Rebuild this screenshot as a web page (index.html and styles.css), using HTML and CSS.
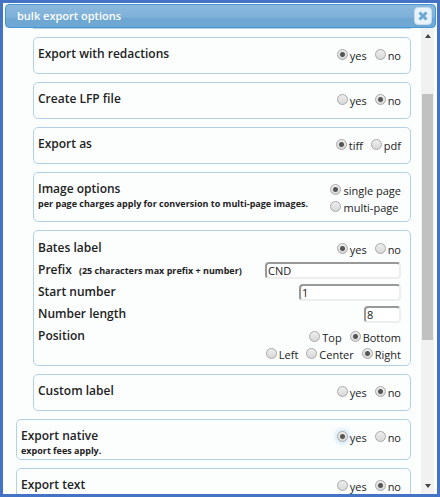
FILE: index.html
```html
<!DOCTYPE html>
<html lang="en">

<head>
    <meta charset="UTF-8">
    <meta name="viewport" content="width=device-width, initial-scale=1.0">
    <title>bulk export options</title>
    <link rel="stylesheet" href="styles.css">
</head>

<body>
    <div class="dialog">
        <div class="titlebar">
            <h1>bulk export options</h1>
            <button type="button" class="close-btn" aria-label="close">
                <svg width="10" height="10" viewBox="0 0 10 10">
                    <path d="M1.5 1.5L8.5 8.5M8.5 1.5L1.5 8.5" stroke="#6da8d5" stroke-width="3" fill="none" />
                </svg>
            </button>
        </div>
        <div class="content">
            <form class="options">
                <div class="panel-end sub"></div>
                <div class="panel sub">
                    <h2>Export with redactions</h2>
                    <div class="choices">
                        <label><input type="radio" name="redactions" checked>yes</label>
                        <label><input type="radio" name="redactions">no</label>
                    </div>
                </div>
                <div class="panel sub">
                    <h2>Create LFP file</h2>
                    <div class="choices">
                        <label><input type="radio" name="lfp">yes</label>
                        <label><input type="radio" name="lfp" checked>no</label>
                    </div>
                </div>
                <div class="panel sub">
                    <h2>Export as</h2>
                    <div class="choices">
                        <label><input type="radio" name="format" checked>tiff</label>
                        <label><input type="radio" name="format">pdf</label>
                    </div>
                </div>
                <div class="panel sub">
                    <div>
                        <h2>Image options</h2>
                        <p class="note">per page charges apply for conversion to multi-page images.</p>
                    </div>
                    <div class="choices stacked">
                        <label><input type="radio" name="pages" checked>single page</label>
                        <label><input type="radio" name="pages">multi-page</label>
                    </div>
                </div>
                <div class="panel sub bates">
                    <div class="row">
                        <h2>Bates label</h2>
                        <div class="choices">
                            <label><input type="radio" name="bates" checked>yes</label>
                            <label><input type="radio" name="bates">no</label>
                        </div>
                    </div>
                    <div class="row">
                        <label class="name" for="prefix">Prefix <span class="note">(25 characters max prefix + number)</span></label>
                        <input type="text" id="prefix" class="field long" maxlength="25" value="CND">
                    </div>
                    <div class="row">
                        <label class="name" for="start">Start number</label>
                        <input type="text" id="start" class="field medium" value="1">
                    </div>
                    <div class="row">
                        <label class="name" for="length">Number length</label>
                        <input type="text" id="length" class="field short" value="8">
                    </div>
                    <div class="row">
                        <h2>Position</h2>
                        <div class="position">
                            <div class="choices">
                                <label><input type="radio" name="vertical">Top</label>
                                <label><input type="radio" name="vertical" checked>Bottom</label>
                            </div>
                            <div class="choices">
                                <label><input type="radio" name="horizontal">Left</label>
                                <label><input type="radio" name="horizontal">Center</label>
                                <label><input type="radio" name="horizontal" checked>Right</label>
                            </div>
                        </div>
                    </div>
                </div>
                <div class="panel sub">
                    <h2>Custom label</h2>
                    <div class="choices">
                        <label><input type="radio" name="custom">yes</label>
                        <label><input type="radio" name="custom" checked>no</label>
                    </div>
                </div>
                <div class="panel">
                    <div>
                        <h2>Export native</h2>
                        <p class="note">export fees apply.</p>
                    </div>
                    <div class="choices">
                        <label><input type="radio" name="native" class="glow" checked>yes</label>
                        <label><input type="radio" name="native">no</label>
                    </div>
                </div>
                <div class="panel">
                    <h2>Export text</h2>
                    <div class="choices">
                        <label><input type="radio" name="text">yes</label>
                        <label><input type="radio" name="text" checked>no</label>
                    </div>
                </div>
            </form>
            <div class="scrollbar" aria-hidden="true">
                <div class="arrow up"></div>
                <div class="track">
                    <div class="thumb"></div>
                </div>
                <div class="arrow down"></div>
            </div>
        </div>
    </div>
</body>

</html>
```

FILE: styles.css
```css
* {
    box-sizing: border-box;
}

body {
    margin: 0;
    height: 100vh;
    font-family: "Open Sans", "Noto Sans", sans-serif;
    font-size: 11px;
    color: #222;
}

h1,
h2,
p {
    margin: 0;
}

.dialog {
    display: flex;
    flex-direction: column;
    height: 100%;
    padding: 1px 1px 0 2px;
    border: 3px solid #4472c4;
    background-color: #fcfefe;
}

.titlebar {
    display: flex;
    justify-content: space-between;
    align-items: center;
    flex: none;
    height: 24px;
    padding: 0 3px 0 11px;
    border: 1px solid #4297d7;
    border-radius: 4px;
    background: linear-gradient(#8ab8dc, #7fb1d9 55%, #6ea7d2 60%, #6fa8d3);
}

.titlebar h1 {
    font-size: 11px;
    font-weight: 600;
    line-height: 20px;
    color: #fff;
}

.close-btn {
    display: flex;
    justify-content: center;
    align-items: center;
    width: 18px;
    height: 18px;
    padding: 0;
    border: 1px solid #c5dbec;
    border-radius: 4px;
    background-color: #e8f2fa;
    cursor: pointer;
}

.content {
    display: flex;
    flex: 1;
    min-height: 0;
    padding-right: 2px;
    overflow: hidden;
}

.options {
    display: flex;
    flex-direction: column;
    flex: 1;
    gap: 8px;
    padding: 0 10px 0 11px;
}

.panel {
    display: flex;
    justify-content: space-between;
    flex: none;
    min-height: 37px;
    padding: 8px 9px 2px 4px;
    border: 1px solid #b3d0e8;
    border-radius: 5px;
}

.sub {
    margin-left: 17px;
}

.panel-end {
    flex: none;
    height: 1px;
    background-color: #b3d0e8;
}

h2,
.name {
    font-size: 12px;
    font-weight: 600;
    line-height: 16px;
}

.note {
    margin-top: 1px;
    font-size: 9px;
    font-weight: bold;
    line-height: 12px;
}

.name .note {
    margin-left: 4px;
}

.choices {
    display: flex;
    gap: 8px;
    padding-top: 1px;
}

.choices label {
    display: flex;
    gap: 2px;
    line-height: 18px;
}

.stacked {
    flex-direction: column;
    gap: 0;
    padding-bottom: 3px;
}

.stacked label,
.position label {
    line-height: 17px;
}

.choices input {
    appearance: none;
    flex: none;
    width: 11px;
    height: 11px;
    margin: 2px 0 0;
    border: 1px solid #a8a8a8;
    border-radius: 50%;
    background: linear-gradient(#eee, #d8d8d8);
}

.choices input:checked {
    background: radial-gradient(circle, #555 2px, transparent 3px), linear-gradient(#eee, #d8d8d8);
}

.choices .glow {
    box-shadow: 0 0 4px 2px #cfe5f7;
}

.bates {
    flex-direction: column;
    justify-content: flex-start;
    padding-top: 9px;
}

.row {
    display: flex;
    justify-content: space-between;
    min-height: 22px;
}

.field {
    height: 17px;
    padding: 0 1px;
    border: 2px solid;
    border-color: #999 #eee #eee #999;
    border-radius: 4px;
    background-color: #fff;
    font: inherit;
    color: #222;
}

.long {
    width: 136px;
}

.medium {
    width: 102px;
}

.short {
    width: 37px;
}

.position {
    padding-top: 1px;
}

.position .choices {
    justify-content: flex-end;
    padding-top: 0;
}

.scrollbar {
    display: flex;
    flex-direction: column;
    width: 13px;
    background-color: #f1f1f1;
}

.arrow {
    flex: none;
    width: 6px;
    margin: 6px auto;
    border: 3px solid transparent;
}

.up {
    border-top: 0;
    border-bottom: 4px solid #444;
}

.down {
    border-bottom: 0;
    border-top: 4px solid #444;
}

.track {
    flex: 1;
    padding: 50px 1px 0;
}

.thumb {
    height: 64%;
    background-color: #c1c1c1;
}
```
